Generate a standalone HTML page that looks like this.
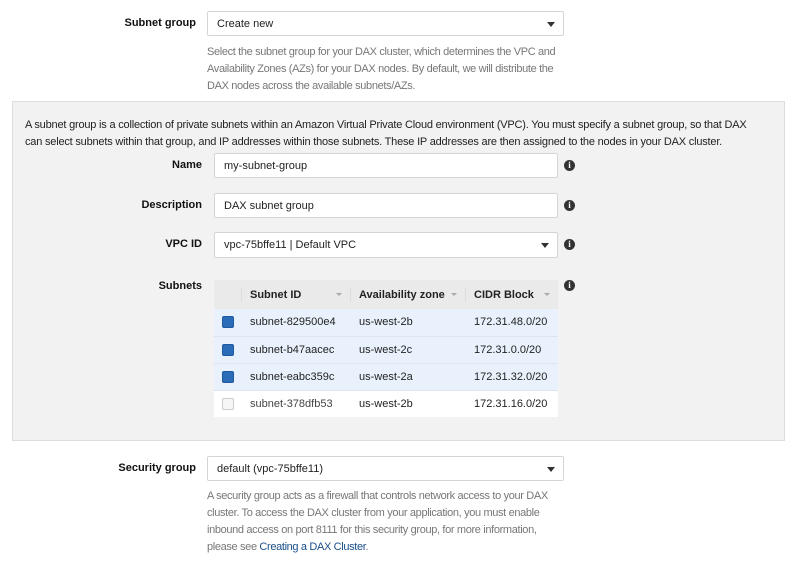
<!DOCTYPE html>
<html><head><meta charset="utf-8"><style>
*{box-sizing:border-box;margin:0;padding:0}
body{width:800px;height:570px;background:#fff;font-family:"Liberation Sans",sans-serif;font-size:11px;color:#333;position:relative;overflow:hidden}
.a{position:absolute;white-space:nowrap}
.lbl{font-weight:bold;color:#111;text-align:right}
.box{position:absolute;background:#fff;border:1px solid #d5d5d5;border-radius:2px;padding-left:9px;display:flex;align-items:center;color:#222;font-size:11px}
.arr{position:absolute;right:8px;top:50%;margin-top:-2px;width:0;height:0;border-left:4px solid transparent;border-right:4px solid transparent;border-top:5px solid #333}
.help{color:#777;line-height:17px;letter-spacing:-0.35px}
.info{position:absolute;width:11px;height:11px;border-radius:50%;background:#333;color:#fff;font-size:9px;font-weight:bold;text-align:center;line-height:11px;font-family:"Liberation Serif",serif}
.panel{position:absolute;left:12px;top:101px;width:773px;height:340px;background:#f2f2f2;border:1px solid #ddd}
table{position:absolute;left:214px;top:280px;width:344px;border-collapse:collapse;font-size:11px}
td,th{height:27px;text-align:left;padding-left:9px;color:#222}
th{background:#eaeaea;font-weight:bold;height:29px;position:relative}
tr.s td{background:#e9f2fc;border-bottom:1px solid #dde6f0}
tr.u td{background:#fff}
.cb{width:12px;height:12px;border-radius:2px;background:#2b6cb8;border:1px solid #1f5aa0;display:inline-block;vertical-align:middle}
.cb.e{background:#f6f6f6;border:1px solid #ccc}
.sa{position:absolute;right:8px;top:13px;border-left:3px solid transparent;border-right:3px solid transparent;border-top:3px solid #aaa}
.sep{position:absolute;left:0;top:7px;height:15px;border-left:1px solid #ddd}
a{color:#1a4f8b;text-decoration:none}
</style></head><body>

<div class="a lbl" style="left:100px;width:96px;top:17px">Subnet group</div>
<div class="box" style="left:207px;top:11px;width:357px;height:25px">Create new<span class="arr"></span></div>
<div class="a help" style="left:207px;top:44px">Select the subnet group for your DAX cluster, which determines the VPC and<br>Availability Zones (AZs) for your DAX nodes. By default, we will distribute the<br>DAX nodes across the available subnets/AZs.</div>

<div class="panel"></div>
<div class="a" style="left:25px;top:117px;line-height:17px;color:#222;letter-spacing:-0.2px">A subnet group is a collection of private subnets within an Amazon Virtual Private Cloud environment (VPC). You must specify a subnet group, so that DAX<br>can select subnets within that group, and IP addresses within those subnets. These IP addresses are then assigned to the nodes in your DAX cluster.</div>

<div class="a lbl" style="left:100px;width:102px;top:159px">Name</div>
<div class="box" style="left:214px;top:153px;width:344px;height:25px">my-subnet-group</div>
<div class="info" style="left:564px;top:160px">i</div>

<div class="a lbl" style="left:100px;width:102px;top:199px">Description</div>
<div class="box" style="left:214px;top:193px;width:344px;height:25px">DAX subnet group</div>
<div class="info" style="left:564px;top:200px">i</div>

<div class="a lbl" style="left:100px;width:102px;top:238px">VPC ID</div>
<div class="box" style="left:214px;top:232px;width:344px;height:26px">vpc-75bffe11 | Default VPC<span class="arr"></span></div>
<div class="info" style="left:564px;top:239px">i</div>

<div class="a lbl" style="left:100px;width:102px;top:280px">Subnets</div>
<div class="info" style="left:564px;top:280px">i</div>
<table>
<tr><th style="width:27px;padding:0"></th><th style="width:109px"><span class="sep"></span>Subnet ID<span class="sa"></span></th><th style="width:115px"><span class="sep"></span>Availability zone<span class="sa"></span></th><th><span class="sep"></span>CIDR Block<span class="sa"></span></th></tr>
<tr class="s"><td style="padding-left:8px"><span class="cb"></span></td><td>subnet-829500e4</td><td>us-west-2b</td><td>172.31.48.0/20</td></tr>
<tr class="s"><td style="padding-left:8px"><span class="cb"></span></td><td>subnet-b47aacec</td><td>us-west-2c</td><td>172.31.0.0/20</td></tr>
<tr class="s"><td style="padding-left:8px"><span class="cb"></span></td><td>subnet-eabc359c</td><td>us-west-2a</td><td>172.31.32.0/20</td></tr>
<tr class="u"><td style="padding-left:8px"><span class="cb e"></span></td><td style="color:#444">subnet-378dfb53</td><td>us-west-2b</td><td>172.31.16.0/20</td></tr>
</table>

<div class="a lbl" style="left:80px;width:116px;top:462px">Security group</div>
<div class="box" style="left:207px;top:456px;width:357px;height:25px">default (vpc-75bffe11)<span class="arr"></span></div>
<div class="a help" style="left:207px;top:488px">A security group acts as a firewall that controls network access to your DAX<br>cluster. To access the DAX cluster from your application, you must enable<br>inbound access on port 8111 for this security group, for more information,<br>please see <a>Creating a DAX Cluster</a>.</div>

</body></html>
